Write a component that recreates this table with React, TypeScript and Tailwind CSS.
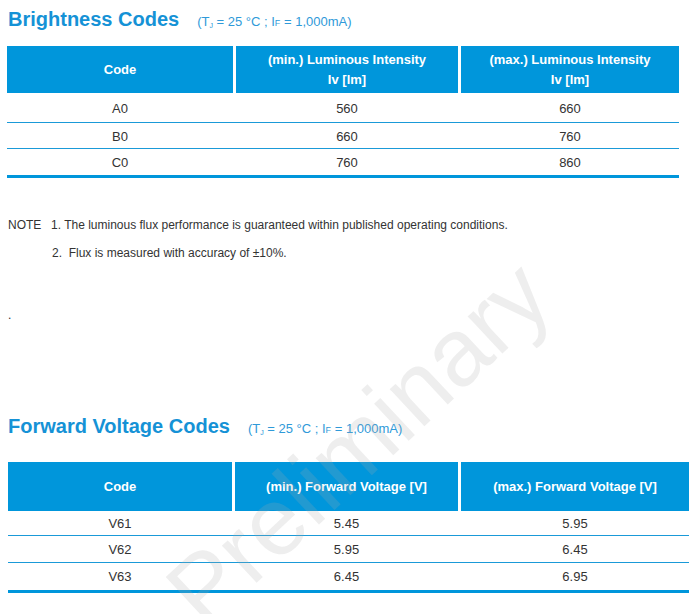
const blue = "bg-[#0096db]";

type Row = [string, string, string];

const brightness: Row[] = [
  ["A0", "560", "660"],
  ["B0", "660", "760"],
  ["C0", "760", "860"],
];

const voltage: Row[] = [
  ["V61", "5.45", "5.95"],
  ["V62", "5.95", "6.45"],
  ["V63", "6.45", "6.95"],
];

function Conditions() {
  return (
    <span className="text-[13px] text-[#2f9ad9] leading-none">
      (T<sub className="text-[7px] align-baseline">J</sub> = 25 °C ; I
      <span className="text-[9px]">F</span> = 1,000mA)
    </span>
  );
}

function Heading({ title }: { title: string }) {
  return (
    <div className="flex items-baseline pl-2 gap-[18px]">
      <h2 className="text-[20px] font-bold text-[#1592d6] leading-6">{title}</h2>
      <Conditions />
    </div>
  );
}

function Table({
  cols,
  head,
  rows,
  headH,
  rowH,
  pad,
}: {
  cols: string[];
  head: React.ReactNode[];
  rows: Row[];
  headH: string;
  rowH: string[];
  pad: string;
}) {
  return (
    <div className="flex flex-col">
      <div className={`flex gap-[3px] ${headH}`}>
        {head.map((h, i) => (
          <div
            key={i}
            className={`${cols[i]} ${blue} flex items-center justify-center text-center text-white font-bold text-[13px] leading-5`}
          >
            {h}
          </div>
        ))}
      </div>
      {rows.map((r, ri) => (
        <div
          key={ri}
          className={`flex gap-[3px] items-center text-[13px] text-[#333] ${pad} ${rowH[ri]} ${
            ri === rows.length - 1 ? "border-b-[3px] border-[#0096db]" : "border-b border-[#1a9ad8]"
          }`}
        >
          {r.map((c, ci) => (
            <div key={ci} className={`${cols[ci]} text-center`}>
              {c}
            </div>
          ))}
        </div>
      ))}
    </div>
  );
}

export default function App() {
  return (
    <div
      className="relative w-[697px] h-[614px] overflow-hidden bg-white"
      style={{ fontFamily: '"Liberation Sans", Arial, sans-serif' }}
    >
      <div className="pt-[7px]">
        <Heading title="Brightness Codes" />
      </div>

      <div className="mt-[15px] pl-[7px] w-[679px]">
        <Table
          cols={["w-[226px]", "w-[222px]", "w-[218px]"]}
          headH="h-[47px]"
          rowH={["h-[30px]", "h-[26px]", "h-[29px]"]}
          pad="pt-[2px]"
          head={[
            "Code",
            <>
              (min.) Luminous Intensity
              <br />
              Iv [lm]
            </>,
            <>
              (max.) Luminous Intensity
              <br />
              Iv [lm]
            </>,
          ]}
          rows={brightness}
        />
      </div>

      <div className="mt-[39px] pl-2 text-[12px] text-[#333] leading-[16px]">
        <div className="flex">
          <span className="w-[43px]">NOTE</span>
          <span>1. The luminous flux performance is guaranteed within published operating conditions.</span>
        </div>
        <div className="mt-[12px] pl-[44px]">2.&nbsp; Flux is measured with accuracy of ±10%.</div>
        <div className="mt-[46px]">.</div>
      </div>

      <div className="mt-[91px]">
        <Heading title="Forward Voltage Codes" />
      </div>

      <div className="mt-[24px] pl-2 w-[689px]">
        <Table
          cols={["w-[224px]", "w-[223px]", "w-[228px]"]}
          headH="h-[49px]"
          rowH={["h-[25px]", "h-[27px]", "h-[30px]"]}
          pad="pt-[1px]"
          head={["Code", "(min.) Forward Voltage [V]", "(max.) Forward Voltage [V]"]}
          rows={voltage}
        />
      </div>

      {/* watermark */}
      <div className="pointer-events-none absolute left-[358px] top-[443px] -translate-x-1/2 -translate-y-1/2 -rotate-[43deg] text-[96px] leading-none text-[rgba(170,170,170,0.2)] whitespace-nowrap">
        Preliminary
      </div>
    </div>
  );
}
